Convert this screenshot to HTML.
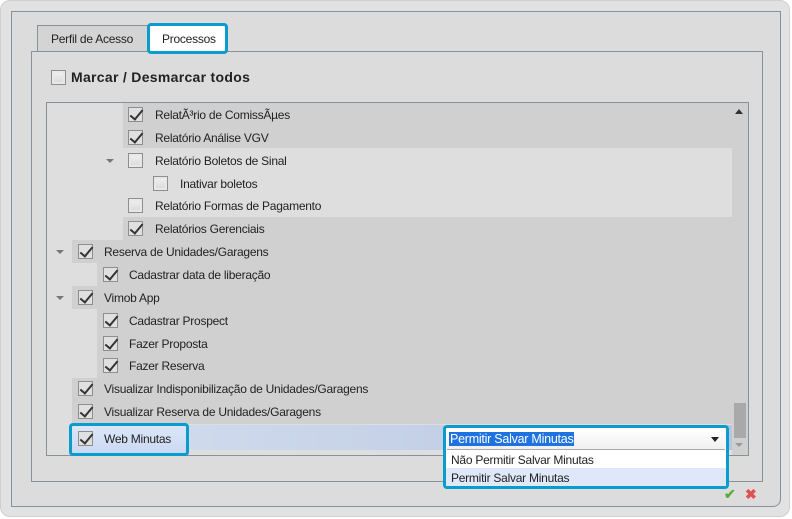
<!DOCTYPE html>
<html><head><meta charset="utf-8"><style>
*{box-sizing:border-box;margin:0;padding:0}
body{width:792px;height:519px;background:#fff;font-family:"Liberation Sans",sans-serif;font-size:12px;color:#222;position:relative;overflow:hidden}
.abs{position:absolute}
.outer{left:0;top:0;width:790px;height:517px;background:#e2e2e2;border-radius:10px;border:1px solid #cfcfcf}
.frame{left:11px;top:11px;width:770px;height:496px;background:#dcdcdc;border:1px solid #8a9099;border-radius:0 0 8px 0}
.cb{position:absolute;width:15px;height:15px;border:1px solid #8e8e8e;background:linear-gradient(#f2f2f2,#d8d8d8);box-shadow:inset 0 0 0 2px #e8e8e8}
.cb.c::after{content:"";position:absolute;left:4px;top:-1px;width:5px;height:11px;border-right:2px solid #333;border-bottom:2px solid #333;transform:rotate(40deg)}
.cb.c{box-shadow:none;background:#e0e0e0}
.t{position:absolute;white-space:nowrap;line-height:14px;letter-spacing:-0.25px}
.row{position:absolute;background:#d0d0d0;height:23px}
.arr{position:absolute;width:0;height:0;border-left:4px solid transparent;border-right:4px solid transparent;border-top:4px solid #777}
</style></head><body>
<div class="abs outer"></div>
<div class="abs frame"></div>
<div class="abs" style="left:37px;top:25px;width:111px;height:27px;background:#d4d4d4;border:1px solid #8a9099;border-bottom:none"></div>
<div class="t" style="left:51px;top:32px">Perfil de Acesso</div>
<div class="abs" style="left:31px;top:51px;width:732px;height:431px;border:1px solid #8a9099;background:#dcdcdc"></div>
<div class="abs" style="left:147px;top:23px;width:81px;height:31px;background:#fff;border:3px solid #0a9ccc;border-radius:4px"></div>
<div class="t" style="left:162px;top:32px">Processos</div>
<div class="cb" style="left:51px;top:70px"></div>
<div class="t" style="left:71px;top:70px;font-weight:bold;font-size:14px;letter-spacing:0.3px">Marcar / Desmarcar todos</div>
<div class="abs" style="left:46px;top:102px;width:703px;height:354px;border:1px solid #8a9099;background:#dedede;overflow:hidden">
 <div class="row" style="left:76px;top:0;width:630px;height:45px"></div>
 <div class="row" style="left:76px;top:114px;width:630px"></div>
 <div class="row" style="left:25px;top:137px;width:680px"></div>
 <div class="row" style="left:50px;top:160px;width:655px"></div>
 <div class="row" style="left:25px;top:183px;width:680px"></div>
 <div class="row" style="left:50px;top:206px;width:655px;height:69px"></div>
 <div class="row" style="left:25px;top:275px;width:680px;height:46px"></div>
 <div class="row" style="left:22px;top:322px;width:663px;height:25px;background:linear-gradient(90deg,#d4def0,#b8c5de)"></div>
 <div class="abs" style="left:685px;top:0;width:17px;height:352px;background:#d0d0d0"></div>
 <div class="abs" style="left:687px;top:300px;width:12px;height:35px;background:#a9a9a9"></div>
</div>
<div class="abs" style="left:735px;top:109px;width:0;height:0;border-left:4px solid transparent;border-right:4px solid transparent;border-bottom:5px solid #333"></div>
<div class="abs" style="left:735px;top:443px;width:0;height:0;border-left:4px solid transparent;border-right:4px solid transparent;border-top:4px solid #999"></div>

<div class="cb c" style="left:128px;top:107px"></div><div class="t" style="left:155px;top:108px">RelatÃ³rio de ComissÃµes</div>
<div class="cb c" style="left:128px;top:130px"></div><div class="t" style="left:155px;top:131px">Relatório Análise VGV</div>
<div class="arr" style="left:106px;top:159px"></div>
<div class="cb" style="left:128px;top:153px"></div><div class="t" style="left:155px;top:154px">Relatório Boletos de Sinal</div>
<div class="cb" style="left:153px;top:176px"></div><div class="t" style="left:180px;top:177px">Inativar boletos</div>
<div class="cb" style="left:128px;top:198px"></div><div class="t" style="left:155px;top:199px">Relatório Formas de Pagamento</div>
<div class="cb c" style="left:128px;top:221px"></div><div class="t" style="left:155px;top:222px">Relatórios Gerenciais</div>
<div class="arr" style="left:56px;top:250px"></div>
<div class="cb c" style="left:78px;top:244px"></div><div class="t" style="left:104px;top:245px">Reserva de Unidades/Garagens</div>
<div class="cb c" style="left:103px;top:267px"></div><div class="t" style="left:129px;top:268px">Cadastrar data de liberação</div>
<div class="arr" style="left:56px;top:296px"></div>
<div class="cb c" style="left:78px;top:290px"></div><div class="t" style="left:104px;top:291px">Vimob App</div>
<div class="cb c" style="left:103px;top:313px"></div><div class="t" style="left:129px;top:314px">Cadastrar Prospect</div>
<div class="cb c" style="left:103px;top:336px"></div><div class="t" style="left:129px;top:337px">Fazer Proposta</div>
<div class="cb c" style="left:103px;top:358px"></div><div class="t" style="left:129px;top:359px">Fazer Reserva</div>
<div class="cb c" style="left:78px;top:381px"></div><div class="t" style="left:104px;top:382px">Visualizar Indisponibilização de Unidades/Garagens</div>
<div class="cb c" style="left:78px;top:404px"></div><div class="t" style="left:104px;top:405px">Visualizar Reserva de Unidades/Garagens</div>
<div class="abs" style="left:69px;top:423px;width:120px;height:33px;border:3px solid #0a9ccc;border-radius:4px;background:linear-gradient(#dbe6f8,#cbd9f2)"></div>
<div class="cb c" style="left:78px;top:431px"></div><div class="t" style="left:104px;top:432px">Web Minutas</div>
<div class="abs" style="left:443px;top:425px;width:286px;height:64px;border:3px solid #0a9ccc;border-radius:4px;background:#fff">
 <div class="abs" style="left:1px;top:1px;width:278px;height:21px;background:linear-gradient(#fff,#f0f0f0);border-bottom:1px solid #aaa"></div>
 <div class="t" style="left:3px;top:4px;background:#1e73e0;color:#fff;font-size:12.5px;padding:0 1px">Permitir Salvar Minutas</div>
 <div class="abs" style="left:265px;top:9px;border-left:4px solid transparent;border-right:4px solid transparent;border-top:5px solid #222"></div>
 <div class="t" style="left:5px;top:25px">Não Permitir Salvar Minutas</div>
 <div class="abs" style="left:0;top:40px;width:280px;height:18px;background:#dfe8f8"></div>
 <div class="t" style="left:5px;top:43px">Permitir Salvar Minutas</div>
</div>
<div class="t" style="left:724px;top:487px;color:#5aae3c;font-size:14px;font-weight:bold">✔</div>
<div class="t" style="left:745px;top:487px;color:#e05050;font-size:14px;font-weight:bold">✖</div>
</body></html>
